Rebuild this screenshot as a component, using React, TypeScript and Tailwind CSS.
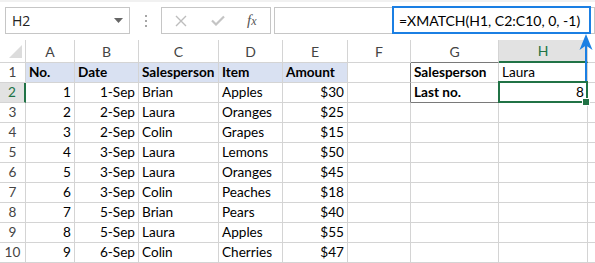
import React from "react";

const GRID = "border-r border-b border-[#d4d4d4]";

type Row = { n: string; a: string; b: string; c: string; d: string; e: string };
const data: Row[] = [
  { n: "1", a: "1", b: "1-Sep", c: "Brian", d: "Apples", e: "$30" },
  { n: "2", a: "2", b: "2-Sep", c: "Laura", d: "Oranges", e: "$25" },
  { n: "3", a: "3", b: "2-Sep", c: "Colin", d: "Grapes", e: "$15" },
  { n: "4", a: "4", b: "3-Sep", c: "Laura", d: "Lemons", e: "$50" },
  { n: "5", a: "5", b: "3-Sep", c: "Laura", d: "Oranges", e: "$45" },
  { n: "6", a: "6", b: "3-Sep", c: "Colin", d: "Peaches", e: "$18" },
  { n: "7", a: "7", b: "5-Sep", c: "Brian", d: "Pears", e: "$40" },
  { n: "8", a: "8", b: "5-Sep", c: "Laura", d: "Apples", e: "$55" },
  { n: "9", a: "9", b: "6-Sep", c: "Colin", d: "Cherries", e: "$47" },
];

function Cell({
  children,
  className = "",
  right = false,
}: {
  children?: React.ReactNode;
  className?: string;
  right?: boolean;
}) {
  return (
    <div
      className={`${GRID} flex items-center px-[3px] whitespace-nowrap overflow-hidden ${
        right ? "justify-end" : "justify-start"
      } ${className}`}
    >
      {children}
    </div>
  );
}

function RowHead({ children, active = false }: { children: React.ReactNode; active?: boolean }) {
  return (
    <div
      className={`border-b border-[#d4d4d4] flex items-center justify-center ${
        active
          ? "bg-[#e2e2e2] text-[#217346] border-r-2 border-r-[#217346]"
          : "bg-white text-[#444] border-r border-r-[#d4d4d4]"
      }`}
    >
      {children}
    </div>
  );
}

export default function App() {
  const colLetters = ["A", "B", "C", "D", "E", "F", "G", "H"];
  return (
    <div
      className="w-[595px] h-[263px] bg-white overflow-hidden relative text-black"
      style={{ fontFamily: "Lato, 'Liberation Sans', sans-serif" }}
    >
      {/* Formula bar */}
      <div className="h-[40px] border-t-2 border-t-[#f1f1f1] flex items-start pt-[5px] pl-[5px]">
        <div className="w-[125px] h-[27px] border border-[#c6c6c6] flex items-center justify-between pl-[6px] pr-[6px]">
          <span className="text-[14px] text-[#222]" style={{ fontFamily: "'Open Sans', sans-serif" }}>
            H2
          </span>
          <svg width="9" height="5" viewBox="0 0 9 5">
            <path d="M0 0 H9 L4.5 5 Z" fill="#666" />
          </svg>
        </div>
        <div className="w-[31px] h-[27px] flex flex-col items-center justify-center gap-[3px]">
          <div className="w-[2px] h-[2px] bg-[#a6a6a6]" />
          <div className="w-[2px] h-[2px] bg-[#a6a6a6]" />
          <div className="w-[2px] h-[2px] bg-[#a6a6a6]" />
        </div>
        <div className="w-[110px] h-[27px] border border-[#c6c6c6] flex items-center">
          <svg width="12" height="12" viewBox="0 0 12 12" className="ml-[13px]">
            <path d="M1 1 L11 11 M11 1 L1 11" stroke="#bdbdbd" strokeWidth="1.4" />
          </svg>
          <svg width="14" height="11" viewBox="0 0 14 11" className="ml-[24px]">
            <path d="M1 5.5 L5 9.5 L13 1.5" stroke="#c4c4c4" strokeWidth="2.2" fill="none" />
          </svg>
          <span
            className="ml-[22px] text-[15px] italic text-[#555] leading-none"
            style={{ fontFamily: "'Liberation Serif', serif" }}
          >
            f<span className="text-[12px]">x</span>
          </span>
        </div>
        <div className="ml-[3px] flex-1 h-[27px] border border-[#c6c6c6]" />
      </div>

      {/* Highlighted formula annotation */}
      <div className="absolute left-[392px] top-[6px] w-[199px] h-[28px] border-2 border-[#1b7fe3] bg-white flex items-center pl-[5px]">
        <span className="text-[14px] text-black">=XMATCH(H1, C2:C10, 0, -1)</span>
      </div>

      {/* Grid */}
      <div className="grid grid-cols-[26px_49px_64px_80px_64px_65px_63px_88px_89px_1fr] grid-rows-[23px_repeat(10,20px)] text-[13.6px]">
        {/* header row */}
        <div className="border-r border-b border-[#d4d4d4] relative">
          <svg width="14" height="14" viewBox="0 0 14 14" className="absolute left-[9px] top-[5px]">
            <path d="M13 0 V13 H0 Z" fill="#dcdcdc" />
          </svg>
        </div>
        {colLetters.map((l) => (
          <div
            key={l}
            className={`flex items-center justify-center text-[14px] ${
              l === "H"
                ? "bg-[#e2e2e2] text-[#217346] border-b-2 border-b-[#217346] border-r border-r-[#d4d4d4]"
                : l === "G"
                ? "text-[#444] border-r border-r-[#d4d4d4] border-b border-b-[#7a7a7a]"
                : "text-[#444] border-r border-b border-[#d4d4d4]"
            }`}
          >
            {l}
          </div>
        ))}
        <div className="border-b border-[#d4d4d4]" />

        {/* row 1 */}
        <RowHead>1</RowHead>
        <Cell className="bg-[#d9e1f2] font-bold">No.</Cell>
        <Cell className="bg-[#d9e1f2] font-bold">Date</Cell>
        <Cell className="bg-[#d9e1f2] font-bold">Salesperson</Cell>
        <Cell className="bg-[#d9e1f2] font-bold">Item</Cell>
        <Cell className="bg-[#d9e1f2] font-bold">Amount</Cell>
        <Cell className="border-r-[#7a7a7a]" />
        <Cell className="font-bold">Salesperson</Cell>
        <Cell>Laura</Cell>
        <div className="border-b border-[#d4d4d4]" />

        {/* rows 2..10 */}
        {data.map((r, i) => {
          const rowNum = i + 2;
          const active = rowNum === 2;
          return (
            <React.Fragment key={rowNum}>
              <RowHead active={active}>{rowNum}</RowHead>
              <Cell right>{r.a}</Cell>
              <Cell right>{r.b}</Cell>
              <Cell>{r.c}</Cell>
              <Cell>{r.d}</Cell>
              <Cell right>{r.e}</Cell>
              <Cell className={active ? "border-r-[#7a7a7a]" : ""} />
              <Cell className={active ? "font-bold border-b-[#7a7a7a]" : ""}>{active ? "Last no." : ""}</Cell>
              {active ? (
                <div className={`${GRID} relative flex items-center justify-end px-[3px]`}>
                  <span>8</span>
                  <div className="absolute left-[-1px] top-[-2px] right-[-1px] bottom-[-1px] border-2 border-[#217346]" />
                  <div className="absolute right-[-3px] bottom-[-4px] w-[6px] h-[6px] bg-[#217346] border border-white box-content" />
                </div>
              ) : (
                <Cell />
              )}
              <div className="border-b border-[#d4d4d4]" />
            </React.Fragment>
          );
        })}
      </div>

      {/* Blue arrow annotation */}
      <svg className="absolute left-[578px] top-[33px]" width="16" height="50" viewBox="0 0 16 50">
        <path d="M8 12 V48" stroke="#1b7fe3" strokeWidth="2" />
        <path d="M8 1 L14.5 17 L8 12.5 L1.5 17 Z" fill="#1b7fe3" />
      </svg>
    </div>
  );
}
